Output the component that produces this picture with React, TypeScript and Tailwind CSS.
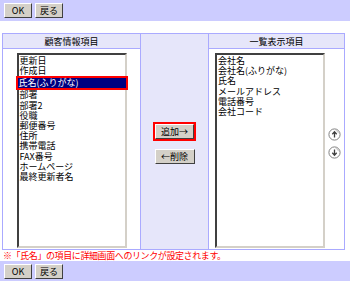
import React from 'react';

const leftItems = [
  '更新日',
  '作成日',
  '氏名(ふりがな)',
  '部署',
  '部署2',
  '役職',
  '郵便番号',
  '住所',
  '携帯電話',
  'FAX番号',
  'ホームページ',
  '最終更新者名',
];

const rightItems = ['会社名', '会社名(ふりがな)', '氏名', 'メールアドレス', '電話番号', '会社コード'];

const Btn: React.FC<{ label: string; className?: string }> = ({ label, className = '' }) => (
  <button
    className={`h-[15px] bg-[#d4d0c8] border border-t-white border-l-white border-b-[#404040] border-r-[#404040] text-[9px] leading-[11px] text-black flex items-center justify-center ${className}`}
  >
    {label}
  </button>
);

const ArrowIcon: React.FC<{ down?: boolean }> = ({ down }) => (
  <svg width="13" height="13" viewBox="0 0 13 13">
    <circle cx="6.5" cy="6.5" r="5.6" fill="#fff" stroke="#808080" strokeWidth="1" />
    <path d="M7.6 2.2a5 5 0 0 1 3 3" stroke="#c0c0c0" fill="none" />
    {down ? (
      <path d="M6.5 3.5v5.5M4.3 6.8l2.2 2.4 2.2-2.4" stroke="#404040" strokeWidth="1.3" fill="none" />
    ) : (
      <path d="M6.5 9.5V4M4.3 6.2l2.2-2.4 2.2 2.4" stroke="#404040" strokeWidth="1.3" fill="none" />
    )}
  </svg>
);

const ListBox: React.FC<{ items: string[]; selected?: number }> = ({ items, selected }) => (
  <div className="w-[110px] h-[195px] bg-white border-2 border-t-[#404040] border-l-[#404040] border-b-[#d4d0c8] border-r-[#d4d0c8] pt-[1px] text-[9px]">
    {items.map((it, i) =>
      i === selected ? (
        <div key={it} className="-mx-[3px] border-2 border-[#ff0000]">
          <div className="bg-[#000080] text-white pl-[1px] h-[10px] leading-[10px] whitespace-nowrap">{it}</div>
        </div>
      ) : (
        <div key={it} className="pl-[1px] h-[10.2px] leading-[10.2px] whitespace-nowrap">
          {it}
        </div>
      )
    )}
  </div>
);

export default function App() {
  return (
    <div
      className="w-[350px] h-[282px] bg-white text-black text-[9px] overflow-hidden"
      style={{ fontFamily: '"Noto Sans CJK JP", "Liberation Sans", sans-serif' }}
    >
      <div className="h-[21px] bg-[#ccccff] flex items-center gap-[3px] pl-[4px]">
        <Btn label="OK" className="w-[28px]" />
        <Btn label="戻る" className="w-[28px]" />
      </div>

      <div className="mt-[12px] ml-[2px] w-[343px] h-[217px] border border-[#aaaaff] grid grid-cols-[137px_69px_1fr] grid-rows-[15px_1fr]">
        <div className="bg-[#e6e6fa] border-b border-[#aaaaff] flex items-center justify-center leading-[11px]">顧客情報項目</div>
        <div className="row-span-2 bg-[#e6e6fa] border-x border-[#aaaaff] flex flex-col items-center justify-center gap-[8px] pt-[2px]">
          <div className="border-2 border-[#ff0000]">
            <Btn label="追加→" className="w-[39px]" />
          </div>
          <Btn label="←削除" className="w-[40px]" />
        </div>
        <div className="bg-[#e6e6fa] border-b border-[#aaaaff] flex items-center justify-center leading-[11px]">一覧表示項目</div>

        <div className="flex justify-center pt-[4px]">
          <ListBox items={leftItems} selected={2} />
        </div>
        <div className="flex pt-[4px] pl-[6px]">
          <ListBox items={rightItems} />
          <div className="flex flex-col gap-[5px] ml-[3px] mt-[75px]">
            <ArrowIcon />
            <ArrowIcon down />
          </div>
        </div>
      </div>

      <div className="pl-[3px] h-[11px] leading-[11px] text-[9px] tracking-[-0.4px] text-[#ff0000] whitespace-nowrap">
        ※「氏名」の項目に詳細画面へのリンクが設定されます。
      </div>

      <div className="h-[20px] bg-[#ccccff] flex items-center gap-[3px] pl-[4px]">
        <Btn label="OK" className="w-[28px]" />
        <Btn label="戻る" className="w-[28px]" />
      </div>
    </div>
  );
}
